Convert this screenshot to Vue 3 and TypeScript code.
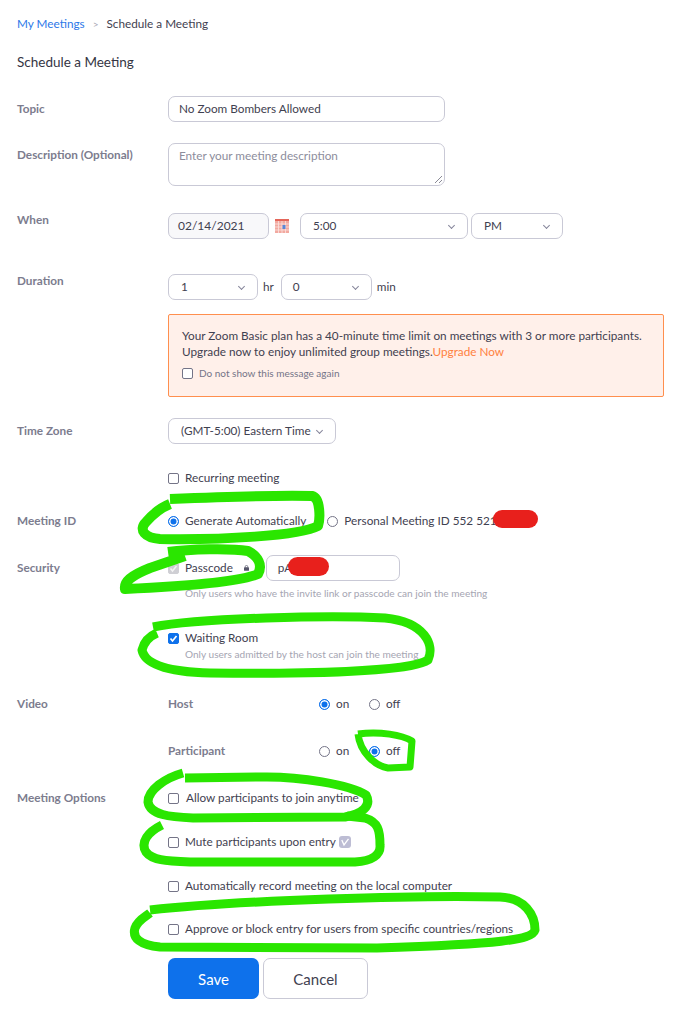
<script setup lang="ts">
const scribbles = [
  { d: 'M170 499 C 220 497 280 495 312 496 C 321 498 320 520 318 526 C 300 536 220 540 160 539 C 145 538 138 530 146 522 C 152 515 160 508 170 504', w: 10 },
  { d: 'M168 552 C 190 549 230 548 248 551 C 258 556 263 565 258 574 C 240 582 190 586 125 589 C 124 582 130 576 150 568 L 185 556', w: 10 },
  { d: 'M153 627 C 200 618 330 615 385 618 C 425 622 435 645 428 660 C 410 672 300 674 210 673 C 170 672 145 665 142 650 C 144 642 150 636 157 633', w: 9 },
  { d: 'M358 734 C 380 731 402 735 412 741 L 410 767 L 388 768 C 375 766 360 752 358 734', w: 7 },
  { d: 'M183 773 C 165 778 148 790 148 802 C 150 815 170 817 193 818 L 345 817 C 362 814 372 806 366 795 C 350 785 300 776 260 777 L 185 778', w: 9 },
  { d: 'M162 825 C 148 832 140 842 146 852 C 152 860 165 861 190 862 L 355 862 C 372 861 381 855 380 845 C 380 830 378 822 365 818 L 347 816', w: 9 },
  { d: 'M150 910 C 240 900 420 895 500 897 C 525 898 535 915 535 930 C 532 940 500 944 377 948 L 160 947 C 140 945 132 938 135 928 C 138 920 145 917 150 913', w: 9 },
]
const optionRows = [
  { text: 'Automatically record meeting on the local computer', gap: 'gapRecord' },
  { text: 'Approve or block entry for users from specific countries/regions', gap: 'gapApprove' },
]
</script>

<template>
  <div class="page">
    <nav class="crumbs">
      <a>My Meetings</a><span class="sep">&gt;</span><span class="here">Schedule a Meeting</span>
    </nav>
    <h1>Schedule a Meeting</h1>

    <div class="row topic">
      <label>Topic</label>
      <div class="box wide">No Zoom Bombers Allowed</div>
    </div>

    <div class="row descr">
      <label>Description (Optional)</label>
      <div class="box wide area">
        <span class="placeholder">Enter your meeting description</span>
        <svg class="grip" width="9" height="9" viewBox="0 0 9 9"><path d="M1 8 8 1M5 8l3-3" stroke="#8a8a96" fill="none" /></svg>
      </div>
    </div>

    <div class="row when">
      <label>When</label>
      <div class="controls">
        <div class="box date">02/14/2021</div>
        <svg class="cal" width="14" height="14" viewBox="0 0 14 14">
          <rect width="14" height="14" fill="#f2a9a0" />
          <rect width="14" height="2" fill="#e4665a" />
          <path d="M0 5h14M0 8h14M0 11h14M3.500 2v12M7 2v12M10.500 2v12" stroke="#fbe3df" stroke-width=".8" />
          <rect x="7.500" y="6" width="3" height="4" fill="#5b86d6" />
        </svg>
        <div class="box select time">5:00<i class="chev"></i></div>
        <div class="box select ampm">PM<i class="chev"></i></div>
      </div>
    </div>

    <div class="row duration">
      <label>Duration</label>
      <div class="controls">
        <div class="box select hrs">1<i class="chev"></i></div>
        <span class="unit hr">hr</span>
        <div class="box select mins">0<i class="chev"></i></div>
        <span class="unit">min</span>
      </div>
    </div>

    <div class="alert">
      <p>Your Zoom Basic plan has a 40-minute time limit on meetings with 3 or more participants.<br />Upgrade now to enjoy unlimited group meetings.<a>Upgrade Now</a></p>
      <div class="dismiss"><span class="check"></span><span>Do not show this message again</span></div>
    </div>

    <div class="row zone">
      <label>Time Zone</label>
      <div class="box select tz">(GMT-5:00) Eastern Time<i class="chev"></i></div>
    </div>

    <div class="row recurring">
      <span></span>
      <div class="opt"><span class="check"></span>Recurring meeting</div>
    </div>

    <div class="row meetingId">
      <label>Meeting ID</label>
      <div class="controls">
        <div class="opt"><span class="radio on"></span>Generate Automatically</div>
        <div class="opt personal"><span class="radio"></span>Personal Meeting ID 552 521</div>
      </div>
    </div>

    <div class="row security">
      <label>Security</label>
      <div class="controls">
        <div class="opt">
          <span class="check disabled"><svg width="11" height="11" viewBox="0 0 11 11"><path d="M2.500 5.500 4.500 8 8.500 3" stroke="#f4f4f4" stroke-width="1.500" fill="none" /></svg></span>Passcode
          <svg class="lock" width="5" height="6" viewBox="0 0 7 8"><rect y="3" width="7" height="5" rx="1" fill="#55566a" /><path d="M1.700 3.500V2.200a1.800 1.800 0 0 1 3.600 0v1.300" stroke="#55566a" fill="none" /></svg>
        </div>
        <div class="box code">pA</div>
      </div>
    </div>
    <div class="hint first">Only users who have the invite link or passcode can join the meeting</div>

    <div class="row waiting">
      <span></span>
      <div class="opt"><span class="check blue"><svg width="11" height="11" viewBox="0 0 11 11"><path d="M2.500 5.500 4.500 8 8.500 3" stroke="#fff" stroke-width="1.700" fill="none" /></svg></span>Waiting Room</div>
    </div>
    <div class="hint">Only users admitted by the host can join the meeting</div>

    <div class="row video">
      <label>Video</label>
      <div class="vgrid">
        <span class="sub">Host</span>
        <div class="opt"><span class="radio on"></span>on</div>
        <div class="opt"><span class="radio"></span>off</div>
      </div>
    </div>
    <div class="row participant">
      <span></span>
      <div class="vgrid">
        <span class="sub">Participant</span>
        <div class="opt"><span class="radio"></span>on</div>
        <div class="opt"><span class="radio on"></span>off</div>
      </div>
    </div>

    <div class="row options">
      <label>Meeting Options</label>
      <div class="opt"><span class="check"></span><span class="nudge">Allow participants to join anytime</span></div>
    </div>
    <div class="row mute">
      <span></span>
      <div class="opt">
        <span class="check"></span>Mute participants upon entry
        <svg class="badge" width="12" height="12" viewBox="0 0 12 12">
          <rect width="12" height="12" rx="3" fill="#bdbdd4" />
          <path d="M2.800 4 5 9 9.500 2.800" stroke="#fff" stroke-width="1.300" fill="none" />
        </svg>
      </div>
    </div>
    <div v-for="o in optionRows" :key="o.text" class="row" :class="o.gap">
      <span></span>
      <div class="opt"><span class="check"></span>{{ o.text }}</div>
    </div>

    <div class="actions">
      <button class="save">Save</button>
      <button class="cancel">Cancel</button>
    </div>

    <!-- hand drawn markup on top of the screenshot -->
    <svg class="markup" width="680" height="1024" viewBox="0 0 680 1024">
      <rect x="493" y="510" width="45" height="18" rx="9" fill="#e8201c" />
      <rect x="288" y="557" width="41" height="19" rx="9.500" fill="#e8201c" />
      <path v-for="s in scribbles" :key="s.d" :d="s.d" fill="none" stroke="#2ae600" :stroke-width="s.w" stroke-linejoin="round" />
    </svg>
  </div>
</template>

<style scoped>
.page {
  position: relative;
  width: 680px;
  height: 1024px;
  overflow: hidden;
  box-sizing: border-box;
  padding: 17px 16px 0 17px;
  font: 11.750px/14px Lato, "Open Sans", sans-serif;
  color: #3f4150;
  background: #fff;
}
.crumbs {
  display: flex;
  height: 14px;
}
.crumbs a {
  color: #2d78e8;
}
.sep {
  margin: 0 8px;
  color: #a8a8b4;
  font-size: 10px;
}
.here {
  color: #3f4150;
}
h1 {
  margin: 24px 0 0;
  font-size: 13.500px;
  line-height: 14px;
  font-weight: 400;
  color: #343543;
}
.row {
  display: grid;
  grid-template-columns: 151px 1fr;
  align-items: center;
}
label {
  font-weight: 700;
  color: #7c7c8e;
  align-self: start;
}
.controls {
  display: flex;
  align-items: center;
}
.box {
  box-sizing: border-box;
  height: 26px;
  display: flex;
  align-items: center;
  padding: 0 10px;
  border: 1px solid #c9c9d6;
  border-radius: 7px;
  background: #fff;
  position: relative;
}
.wide {
  width: 277px;
}
.topic {
  margin-top: 27px;
}
.topic label {
  margin-top: 6px;
}
.descr {
  margin-top: 21px;
}
.descr label {
  margin-top: 5px;
}
.area {
  height: 43px;
  align-items: flex-start;
  padding-top: 5px;
}
.placeholder {
  color: #8d8d9c;
}
.grip {
  position: absolute;
  right: 1px;
  bottom: 1px;
}
.when {
  margin-top: 27px;
}
.date {
  width: 101px;
  padding: 0 9px;
  font-size: 12px;
  background: #f8f8fa;
}
.cal {
  margin: 0 11px 0 6px;
}
.select {
  justify-content: flex-start;
}
.chev {
  position: absolute;
  right: 13px;
  top: 9px;
  width: 4px;
  height: 4px;
  border-right: 1px solid #85859a;
  border-bottom: 1px solid #85859a;
  transform: rotate(45deg);
}
.time {
  width: 168px;
  padding-left: 12px;
  margin-right: 3px;
}
.ampm {
  width: 92px;
  padding-left: 12px;
}
.duration {
  margin-top: 35px;
}
.hrs {
  width: 90px;
  padding-left: 12px;
}
.mins {
  width: 91px;
  padding-left: 11px;
}
.unit {
  margin-left: 5px;
}
.hr {
  margin-right: 7px;
}
.alert {
  box-sizing: border-box;
  width: 496px;
  height: 83px;
  margin: 14px 0 0 151px;
  padding: 13px 13px 0;
  border: 1px solid #ff8f4e;
  border-radius: 2px;
  background: #fff0ea;
}
.alert p {
  margin: 0;
  line-height: 16px;
  white-space: nowrap;
}
.alert a {
  color: #ff8040;
}
.dismiss {
  display: flex;
  align-items: center;
  margin-top: 6px;
  font-size: 10px;
  color: #747487;
}
.dismiss .check {
  margin-right: 6px;
}
.zone {
  margin-top: 21px;
}
.zone label {
  margin-top: 6px;
}
.tz {
  width: 168px;
  padding-left: 12px;
}
.opt {
  display: flex;
  align-items: center;
  white-space: nowrap;
}
.check,
.radio {
  box-sizing: border-box;
  flex: none;
  width: 11px;
  height: 11px;
  margin-right: 6px;
  border: 1px solid #747487;
  background: #fff;
  display: inline-flex;
  align-items: center;
  justify-content: center;
}
.check {
  border-radius: 2px;
}
.check svg {
  flex: none;
}
.check.disabled {
  background: #cfcfd4;
  border-color: #cfcfd4;
}
.check.blue {
  background: #0e71eb;
  border-color: #0e71eb;
}
.radio {
  border-radius: 50%;
}
.radio.on {
  border-color: #0e71eb;
  box-shadow: inset 0 0 0 1.500px #fff;
  background: #0e71eb;
}
.recurring {
  margin-top: 27px;
}
.meetingId {
  margin-top: 29px;
}
.personal {
  margin-left: 21px;
}
.security {
  margin-top: 27px;
}
.security label {
  align-self: center;
}
.lock {
  margin: 0 0 0 11px;
}
.code {
  width: 134px;
  margin-left: 17px;
  padding-left: 11px;
}
.hint {
  margin: 6px 0 0 168px;
  font-size: 10.100px;
  line-height: 13px;
  color: #a5a5b2;
}
.waiting {
  margin-top: 31px;
}
.waiting + .hint {
  margin-top: 3px;
}
.video {
  margin-top: 36px;
}
.vgrid {
  display: grid;
  grid-template-columns: 151px 50px 1fr;
  align-items: center;
}
.sub {
  font-weight: 700;
  color: #7c7c8e;
}
.participant {
  margin-top: 33px;
}
.options {
  margin-top: 33px;
}
.options label {
  align-self: center;
}
.nudge {
  margin-left: 1px;
}
.mute {
  margin-top: 30px;
}
.badge {
  margin-left: 3px;
}
.gapRecord {
  margin-top: 30px;
}
.gapApprove {
  margin-top: 29px;
}
.actions {
  display: flex;
  gap: 4px;
  margin: 22px 0 0 151px;
}
button {
  box-sizing: border-box;
  height: 41px;
  padding: 0;
  border-radius: 7px;
  font: 15px Lato, "Open Sans", sans-serif;
}
.save {
  width: 91px;
  border: 0;
  background: #0e71eb;
  color: #fff;
}
.cancel {
  width: 105px;
  border: 1px solid #c9c9d6;
  background: #fff;
  color: #3f4150;
}
.markup {
  position: absolute;
  left: 0;
  top: 0;
  pointer-events: none;
}
</style>
